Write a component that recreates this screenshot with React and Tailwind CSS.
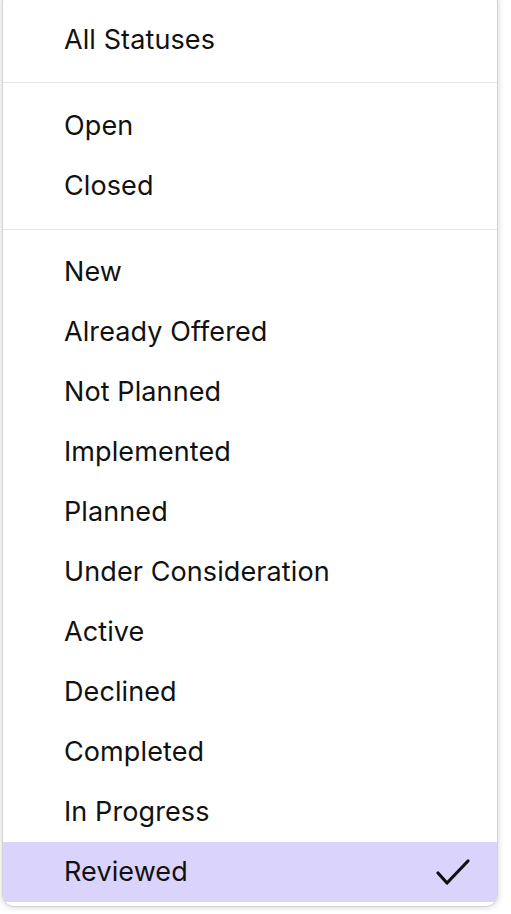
import React from "react";

const Row = ({ label, selected }) => (
  <div
    className={`h-[60px] flex items-center justify-between pl-[61px] pr-[26px] ${
      selected ? "bg-[#dad3fb]" : ""
    }`}
  >
    <span className="text-[27px] text-[#111] tracking-[0.1px] leading-none mb-[2px]">{label}</span>
    {selected && (
      <svg width="36" height="30" viewBox="0 0 36 30" fill="none">
        <path
          d="M3 16 L12 26 L33 4"
          stroke="#111"
          strokeWidth="3.2"
          strokeLinecap="round"
          strokeLinejoin="round"
        />
      </svg>
    )}
  </div>
);

export default function App() {
  const third = [
    "New",
    "Already Offered",
    "Not Planned",
    "Implemented",
    "Planned",
    "Under Consideration",
    "Active",
    "Declined",
    "Completed",
    "In Progress",
  ];
  return (
    <div
      className="w-[511px] h-[914px] bg-white overflow-hidden"
      style={{ fontFamily: "Inter, 'Noto Sans', sans-serif" }}
    >
      <div className="ml-[2px] w-[496px] -mt-[10px] bg-white rounded-[12px] overflow-hidden border border-[#d4d4d4] shadow-[0_0_6px_rgba(0,0,0,0.18)]">
        <div className="pt-[19px] pb-[12px]">
          <Row label="All Statuses" />
        </div>
        <div className="h-px bg-[#e6e6e6]" />
        <div className="pt-[13px] pb-[13px]">
          <Row label="Open" />
          <Row label="Closed" />
        </div>
        <div className="h-px bg-[#e6e6e6]" />
        <div className="pt-[12px] pb-[4px]">
          {third.map((l) => (
            <Row key={l} label={l} />
          ))}
          <Row label="Reviewed" selected />
        </div>
      </div>
    </div>
  );
}
